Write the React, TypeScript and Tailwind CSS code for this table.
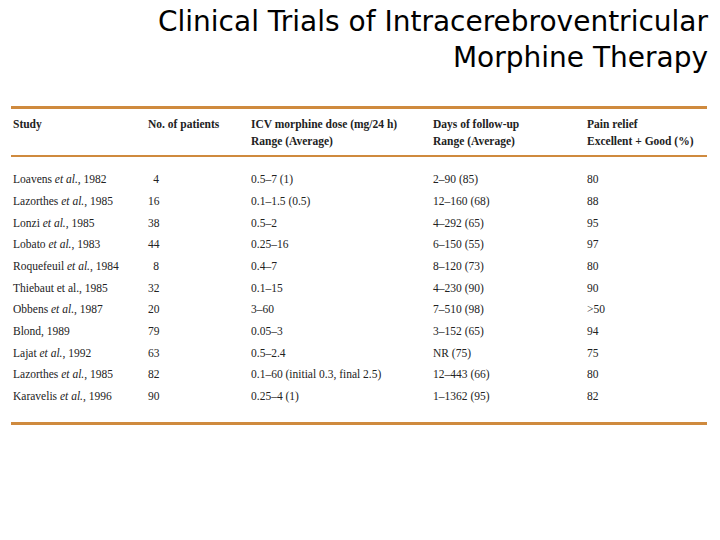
import React from "react";

const rows: [React.ReactNode, string, string, string, string][] = [
  [<>Loavens <i>et al.</i>, 1982</>, "4", "0.5–7 (1)", "2–90 (85)", "80"],
  [<>Lazorthes <i>et al.</i>, 1985</>, "16", "0.1–1.5 (0.5)", "12–160 (68)", "88"],
  [<>Lonzi <i>et al.</i>, 1985</>, "38", "0.5–2", "4–292 (65)", "95"],
  [<>Lobato <i>et al.</i>, 1983</>, "44", "0.25–16", "6–150 (55)", "97"],
  [<>Roquefeuil <i>et al.</i>, 1984</>, "8", "0.4–7", "8–120 (73)", "80"],
  [<>Thiebaut et al., 1985</>, "32", "0.1–15", "4–230 (90)", "90"],
  [<>Obbens <i>et al.</i>, 1987</>, "20", "3–60", "7–510 (98)", ">50"],
  [<>Blond, 1989</>, "79", "0.05–3", "3–152 (65)", "94"],
  [<>Lajat <i>et al.</i>, 1992</>, "63", "0.5–2.4", "NR (75)", "75"],
  [<>Lazorthes <i>et al.</i>, 1985</>, "82", "0.1–60 (initial 0.3, final 2.5)", "12–443 (66)", "80"],
  [<>Karavelis <i>et al.</i>, 1996</>, "90", "0.25–4 (1)", "1–1362 (95)", "82"],
];

export default function App() {
  return (
    <div className="w-[720px] h-[540px] bg-white overflow-hidden relative">
      <div
        className="pr-[12px] pt-[4px] text-right text-[28px] leading-[36px] text-black"
        style={{ fontFamily: '"DejaVu Sans", sans-serif' }}
      >
        <div>Clinical Trials of Intracerebroventricular</div>
        <div>Morphine Therapy</div>
      </div>
      <div
        className="ml-[11px] mt-[30px] w-[696px] text-[#222] text-[11.5px]"
        style={{ fontFamily: '"Liberation Serif", serif' }}
      >
        <div className="border-t-[3px] border-b-[2px] border-[#cf8a3e] pt-[7px] pb-[5px] font-semibold leading-[17px]">
          <div className="grid grid-cols-[137px_103px_182px_154px_1fr]">
            <div className="pl-[2px]">Study</div>
            <div>No. of patients</div>
            <div>ICV morphine dose (mg/24 h)<br />Range (Average)</div>
            <div>Days of follow-up<br />Range (Average)</div>
            <div>Pain relief<br />Excellent + Good (%)</div>
          </div>
        </div>
        <div className="border-b-[3px] border-[#cf8a3e] pt-[12px] pb-[14px]">
          {rows.map((r, i) => (
            <div key={i} className="grid grid-cols-[137px_103px_182px_154px_1fr] h-[21.7px] items-center">
              <div className="pl-[2px] whitespace-nowrap">{r[0]}</div>
              <div><div className="w-[11px] text-right">{r[1]}</div></div>
              <div className="whitespace-nowrap">{r[2]}</div>
              <div>{r[3]}</div>
              <div>{r[4]}</div>
            </div>
          ))}
        </div>
      </div>
    </div>
  );
}
